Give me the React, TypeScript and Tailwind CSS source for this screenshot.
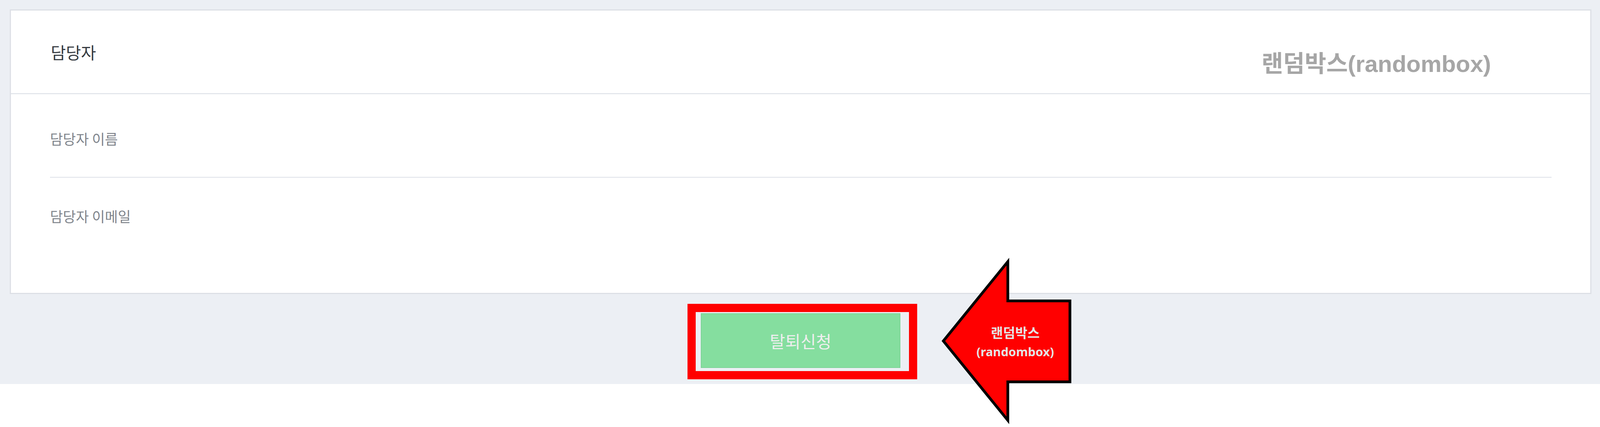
const krFont = "font-['Noto_Sans_CJK_KR','Noto_Sans',sans-serif]";

function ContactRow({ label, last }: { label: string; last?: boolean }) {
  return (
    <div
      className={
        last
          ? "pt-[69px] pb-[169px]"
          : "pt-[85px] pb-[70px] border-b-[3px] border-[#e7eaef]"
      }
    >
      <span className="text-[36px] leading-[56px] text-[#80858c]">{label}</span>
    </div>
  );
}

// red callout arrow pointing at the withdraw button
function ArrowCallout() {
  return (
    <>
      <svg
        className="absolute left-[calc(100%+97px)] top-[-152px]"
        width="345"
        height="442"
        viewBox="0 0 345 442"
      >
        <polygon
          points="13,223 178,20 178,120.5 337,120.5 337,327.5 178,327.5 178,426"
          fill="#ff0000"
          stroke="#000000"
          strokeWidth="7"
          strokeMiterlimit="10"
        />
      </svg>
      <div className="absolute left-[calc(100%+144px)] top-[26px] w-[300px] text-center font-bold text-[#e4e4e4] font-['Noto_Sans','Noto_Sans_CJK_KR',sans-serif]">
        <div className="text-[34px] leading-[48px]">랜덤박스</div>
        <div className="text-[31px] leading-[48px]">(randombox)</div>
      </div>
    </>
  );
}

export default function App() {
  return (
    <div className={`relative w-full h-[1092px] bg-white overflow-hidden ${krFont}`}>
      <section className="bg-[#eceff4] pt-[24px] pb-[41px] pl-[25px] pr-[22px]">
        <div className="border-[3px] border-[#dde0e6] bg-white">
          <div className="flex h-[214px] items-center border-b-[3px] border-[#e4e7ec] px-[102px]">
            <h2 className="text-[42px] leading-[60px] text-[#353a40]">담당자</h2>
          </div>
          <div className="pl-[100px] pr-[99px]">
            <ContactRow label="담당자 이름" />
            <ContactRow label="담당자 이메일" last />
          </div>
        </div>

        <div className="mt-[49px] flex justify-center">
          <div className="relative">
            <button className="flex h-[140px] w-[511px] items-center justify-center border-2 border-[#7dd398] bg-[#85de9f] text-[43px] text-[#eeeeee]">
              탈퇴신청
            </button>
            <div className="pointer-events-none absolute left-[-34px] right-[-43px] top-[-24px] bottom-[-29px] border-[21px] border-[#ff0000]" />
            <ArrowCallout />
          </div>
        </div>
      </section>

      <div className="absolute right-[279px] top-[132px] text-[60px] leading-[64px] font-bold text-[#a6a6a6] font-['Liberation_Sans','Noto_Sans_CJK_KR',sans-serif]">
        랜덤박스(randombox)
      </div>
    </div>
  );
}
